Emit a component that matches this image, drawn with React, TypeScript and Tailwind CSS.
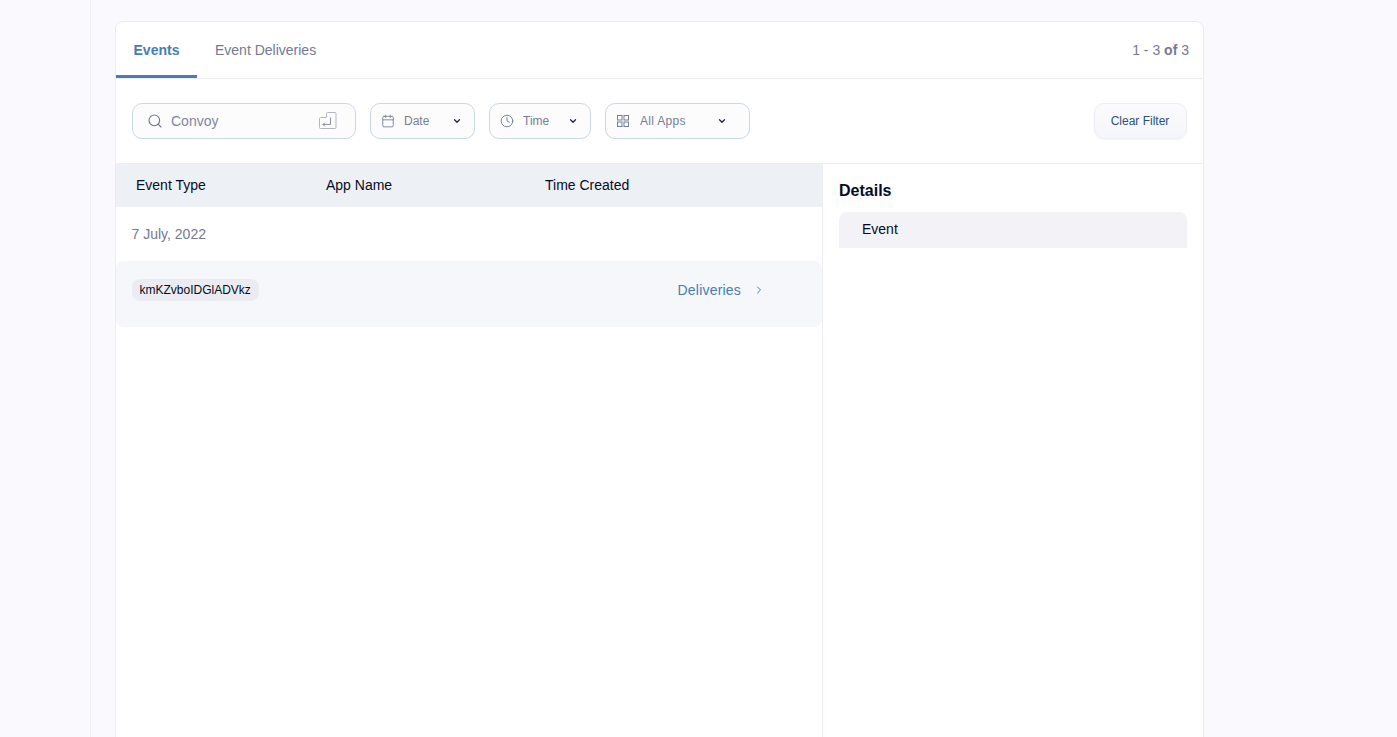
import React from "react";
import { Search, Calendar, Clock, ChevronDown, ChevronRight } from "lucide-react";

function Filter({ icon, label, width, left, right, gap, track }: { icon: React.ReactNode; label: string; width: string; left: string; right: string; gap: string; track?: string }) {
  return (
    <button className={`flex h-9 items-center justify-between rounded-[10px] border border-[#c9d9ea] bg-[#fcfcfd] ${left} ${right} ${width}`}>
      <span className={`flex items-center ${gap}`}>
        {icon}
        <span className={`text-xs text-[#757d98] ${track ?? ""}`}>{label}</span>
      </span>
      <ChevronDown size={10} strokeWidth={3} className="text-[#1c2440]" />
    </button>
  );
}

function EnterKey() {
  return (
    <svg width="18" height="18" viewBox="0 0 18 18" fill="none">
      <path
        d="M7.5 5.5V1.5a1 1 0 0 1 1-1h7.5a1 1 0 0 1 1 1v14a1 1 0 0 1-1 1H1.5a1 1 0 0 1-1-1V6.5a1 1 0 0 1 1-1z"
        stroke="#b4b7c1"
        strokeWidth="1"
      />
      <path d="M11.5 5.5v7H4M6 10.5l-2 2 2 2" stroke="#8b90a1" strokeWidth="1" />
    </svg>
  );
}

function Apps() {
  return (
    <svg width="12" height="12" viewBox="0 0 12 12" fill="none" stroke="#757d98" strokeWidth="1">
      <rect x="0.5" y="0.5" width="4.5" height="4.5" />
      <rect x="7" y="0.5" width="4.5" height="4.5" />
      <rect x="0.5" y="7" width="4.5" height="4.5" />
      <rect x="7" y="7" width="4.5" height="4.5" />
    </svg>
  );
}

export default function App() {
  return (
    <div className="flex h-[737px] overflow-hidden bg-[#f9f9fe] font-['Liberation_Sans',sans-serif]">
      <div className="w-[91px] shrink-0 border-r border-[#eff0f6]" />
      <main className="pl-6 pt-[21px]">
        <div className="h-[800px] w-[1089px] rounded-t-lg border border-[#eaecf3] bg-white">
          <div className="flex h-[57px] items-center justify-between border-b border-[#edeef5] pr-[14px]">
            <div className="flex h-full">
              <div className="flex w-[81px] items-center justify-center border-b-[3px] border-[#477db3] pt-[3px] text-sm font-bold text-[#477db3]">
                Events
              </div>
              <div className="flex items-center pl-[18px] text-sm text-[#737a91]">Event Deliveries</div>
            </div>
            <div className="text-sm text-[#737a91]">
              1 - 3 <b>of</b> 3
            </div>
          </div>
          <div className="flex h-[85px] items-center justify-between border-b border-[#edeef5] px-4">
            <div className="flex items-center gap-[14px]">
              <div className="flex h-9 w-[224px] items-center justify-between rounded-[10px] border border-[#c9d9ea] bg-[#fcfcfd] pl-[14px] pr-[18px]">
                <span className="flex items-center gap-[8px]">
                  <Search size={16} strokeWidth={1.6} className="text-[#6b7289]" />
                  <span className="text-sm text-[#80879c]">Convoy</span>
                </span>
                <EnterKey />
              </div>
              <Filter width="w-[105px]" left="pl-[10px]" right="pr-[12px]" gap="gap-[9px]" label="Date" icon={<Calendar size={14} strokeWidth={1.5} className="text-[#757d98]" />} />
              <Filter width="w-[102px]" left="pl-[10px]" right="pr-[12px]" gap="gap-[9px]" label="Time" icon={<Clock size={14} strokeWidth={1.6} className="text-[#757d98]" />} />
              <Filter width="w-[145px]" left="pl-[11px]" right="pr-[22px]" gap="gap-[11px]" track="tracking-[0.3px]" label="All Apps" icon={<Apps />} />
            </div>
            <button className="h-9 w-[93px] rounded-[10px] border border-[#edeff4] bg-gradient-to-b from-[#fbfbfd] to-[#f5f6f9] pr-[1px] text-xs text-[#2b5079] shadow-[0_1px_2px_rgba(20,30,60,0.05)]">
              Clear Filter
            </button>
          </div>
          <div className="flex">
            <section className="h-[600px] w-[707px] border-r border-[#edeef5]">
              <div className="grid h-[43px] grid-cols-[190px_219px_1fr] items-center bg-[#edf1f5] pb-[2px] pl-5 text-sm text-[#050b26]">
                <span>Event Type</span>
                <span>App Name</span>
                <span>Time Created</span>
              </div>
              <div className="flex h-[54px] items-center pl-[15.5px] text-sm text-[#737a91]">7 July, 2022</div>
              <div className="flex h-[66px] items-center justify-between rounded-lg bg-[#f6f7fb] pb-[8px] pl-4 pr-[57px]">
                <span className="flex h-[22px] items-center rounded-lg bg-[#ebecf1] pl-[7.5px] pr-2 text-xs text-[#050b26]">kmKZvboIDGlADVkz</span>
                <span className="flex items-center gap-[12px] text-sm text-[#477db3]">
                  <span className="tracking-[0.2px]">Deliveries</span>
                  <ChevronRight size={12} strokeWidth={1.8} className="text-[#2f6fae]" />
                </span>
              </div>
            </section>
            <aside className="flex-1 px-4 pt-[18px]">
              <h3 className="text-base font-bold leading-[18px] text-[#050b26]">Details</h3>
              <div className="mt-[12px] flex h-9 items-center rounded-t-lg bg-[#f3f3f7] pb-[2px] pl-[23px] text-sm text-[#050b26]">Event</div>
            </aside>
          </div>
        </div>
      </main>
    </div>
  );
}
